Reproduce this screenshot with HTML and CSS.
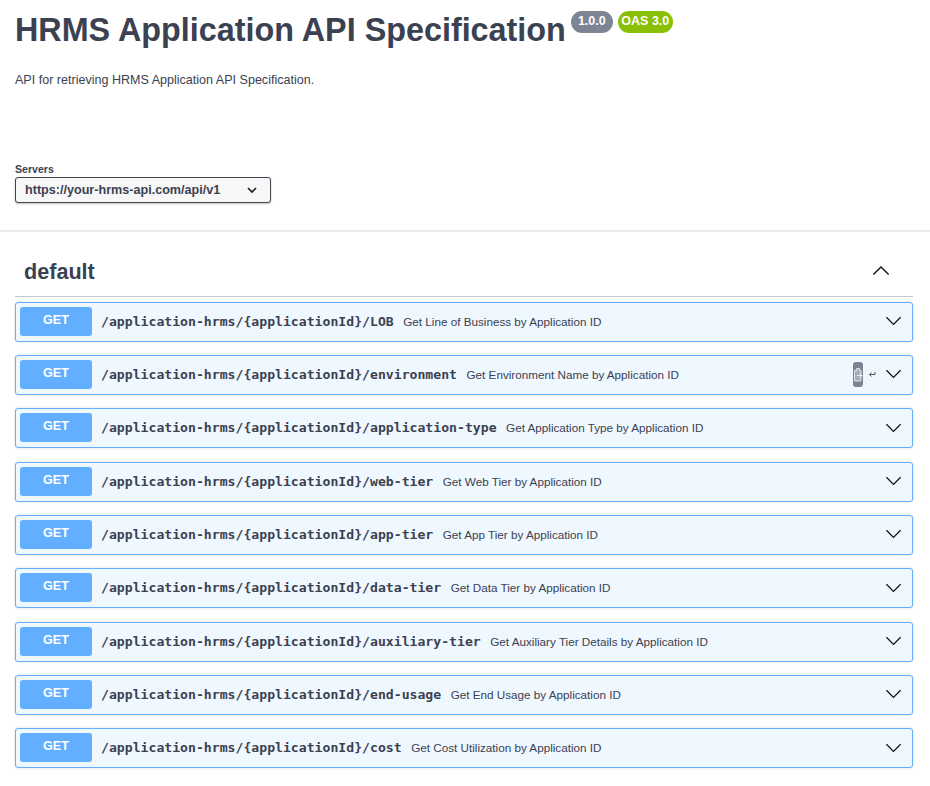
FILE: index.html
```html
<!DOCTYPE html>
<html lang="en">
<head>
<meta charset="utf-8">
<title>HRMS Application API Specification</title>
<link rel="stylesheet" href="styles.css">
</head>
<body>
<header class="info">
  <div class="title-row">
    <h1 class="title">HRMS Application API Specification</h1>
    <span class="badge badge-version">1.0.0</span>
    <span class="badge badge-oas">OAS 3.0</span>
  </div>
  <p class="description">API for retrieving HRMS Application API Specification.</p>
</header>
<section class="servers">
  <div class="servers-label">Servers</div>
  <div class="select">
    <span>https://your-hrms-api.com/api/v1</span>
    <svg class="select-arrow" viewBox="0 0 12 8"><path d="M2 2l4 4 4-4" fill="none" stroke="#222" stroke-width="1.7"/></svg>
  </div>
</section>
<main class="spec">
  <div class="tag">
    <h2 class="tag-name">default</h2>
    <svg class="tag-arrow" viewBox="0 0 20 12"><path d="M1.5 10.5L10 2l8.500 8.500" fill="none" stroke="#111" stroke-width="1.5"/></svg>
  </div>
  <div class="ops">
    <div class="op"><span class="method">GET</span><span class="path">/application-hrms/{applicationId}/LOB</span><span class="summary">Get Line of Business by Application ID</span><svg class="chev" viewBox="0 0 20 12"><path d="M1.500 1.500L10 10l8.500-8.500"/></svg></div>
    <div class="op"><span class="method">GET</span><span class="path">/application-hrms/{applicationId}/environment</span><span class="summary">Get Environment Name by Application ID</span>
      <span class="copy"><svg viewBox="0 0 10 25"><path d="M1.500 8.500h2V6.500h3v2h1.500v10.500h-6.500z" fill="#a9adb9" stroke="#e4e4e8" stroke-width="1"/><path d="M4 13.500h5M7 11.500l2 2-2 2" fill="none" stroke="#f0f0f2" stroke-width="1"/></svg></span>
      <svg class="enter" viewBox="0 0 8 6"><path d="M7 1v2.500H2M3.500 1.500L1.500 3.500l2 2" fill="none" stroke="#444" stroke-width=".9"/></svg>
      <svg class="chev chev-adjacent" viewBox="0 0 20 12"><path d="M1.500 1.500L10 10l8.500-8.500"/></svg></div>
    <div class="op"><span class="method">GET</span><span class="path">/application-hrms/{applicationId}/application-type</span><span class="summary">Get Application Type by Application ID</span><svg class="chev" viewBox="0 0 20 12"><path d="M1.500 1.500L10 10l8.500-8.500"/></svg></div>
    <div class="op"><span class="method">GET</span><span class="path">/application-hrms/{applicationId}/web-tier</span><span class="summary">Get Web Tier by Application ID</span><svg class="chev" viewBox="0 0 20 12"><path d="M1.500 1.500L10 10l8.500-8.500"/></svg></div>
    <div class="op"><span class="method">GET</span><span class="path">/application-hrms/{applicationId}/app-tier</span><span class="summary">Get App Tier by Application ID</span><svg class="chev" viewBox="0 0 20 12"><path d="M1.500 1.500L10 10l8.500-8.500"/></svg></div>
    <div class="op"><span class="method">GET</span><span class="path">/application-hrms/{applicationId}/data-tier</span><span class="summary">Get Data Tier by Application ID</span><svg class="chev" viewBox="0 0 20 12"><path d="M1.500 1.500L10 10l8.500-8.500"/></svg></div>
    <div class="op"><span class="method">GET</span><span class="path">/application-hrms/{applicationId}/auxiliary-tier</span><span class="summary">Get Auxiliary Tier Details by Application ID</span><svg class="chev" viewBox="0 0 20 12"><path d="M1.500 1.500L10 10l8.500-8.500"/></svg></div>
    <div class="op"><span class="method">GET</span><span class="path">/application-hrms/{applicationId}/end-usage</span><span class="summary">Get End Usage by Application ID</span><svg class="chev" viewBox="0 0 20 12"><path d="M1.500 1.500L10 10l8.500-8.500"/></svg></div>
    <div class="op"><span class="method">GET</span><span class="path">/application-hrms/{applicationId}/cost</span><span class="summary">Get Cost Utilization by Application ID</span><svg class="chev" viewBox="0 0 20 12"><path d="M1.500 1.500L10 10l8.500-8.500"/></svg></div>
  </div>
</main>
</body>
</html>
```
FILE: styles.css
```css
html, body { margin: 0; padding: 0; background: #fff; }
body { font-family: "Liberation Sans", Arial, sans-serif; color: #3b4151; width: 930px; height: 786px; overflow: hidden; }

.info { padding: 11px 15px 0; height: 150px; box-sizing: border-box; }
.title-row { display: flex; align-items: flex-start; }
.title { margin: 0; font-size: 32.350px; line-height: 38px; font-weight: 700; white-space: nowrap; }
.badge { color: #fff; font-size: 12.500px; font-weight: 700; line-height: 21px; height: 22px; border-radius: 11px; box-sizing: border-box; text-align: center; flex: none; }
.badge-version { background: #7d8492; margin-left: 5px; width: 42px; }
.badge-oas { background: #89bf04; margin-left: 5px; width: 55px; }
.description { margin: 23px 0 0; font-size: 12.550px; line-height: 16px; }

.servers { padding: 13px 15px 0; height: 82px; box-sizing: border-box; border-bottom: 2px solid #ebebeb; }
.servers-label { font-size: 10.600px; line-height: 12px; font-weight: 700; }
.select { margin-top: 2px; width: 256px; height: 26px; box-sizing: border-box; border: 1.500px solid #41444e; border-radius: 3px; background: #f7f7f7; box-shadow: 0 1px 2px rgba(0,0,0,.25); display: flex; align-items: center; justify-content: space-between; padding: 0 12px 0 9px; font-size: 12.600px; font-weight: 700; }
.select-arrow { width: 12px; height: 8px; }

.spec { padding: 0 17px 0 15px; }
.tag { height: 65px; box-sizing: border-box; border-bottom: 1px solid #c6c8cc; display: flex; align-items: center; justify-content: space-between; padding: 15px 23px 0 9px; }
.tag-name { margin: 0; font-size: 21.600px; line-height: 26px; font-weight: 700; }
.tag-arrow { width: 18px; height: 11px; margin-top: -2px; }

.ops { padding-top: 4.700px; display: flex; flex-direction: column; gap: 13.330px; }
.op { height: 40px; box-sizing: border-box; border: 1px solid #61affe; border-radius: 3px; background: #eff7ff; box-shadow: 0 0 3px rgba(0,0,0,.14); display: flex; align-items: center; padding: 0 10px 1.200px 4px; }
.method { width: 72px; height: 29px; background: #61affe; border-radius: 3px; color: #fff; font-size: 12.600px; font-weight: 700; line-height: 26px; text-align: center; flex: none; }
.path { margin-left: 9px; font-family: "DejaVu Sans Mono", monospace; font-size: 13.150px; font-weight: 700; white-space: nowrap; }
.summary { margin-left: 9.500px; font-size: 11.700px; white-space: nowrap; }
.chev { width: 17px; height: 10px; margin-left: auto; flex: none; }
.chev path { fill: none; stroke: #111; stroke-width: 1.500; }
.chev-adjacent { margin-left: 9px; }
.copy { margin-left: auto; width: 10px; height: 25px; background: #7d8293; border-radius: 3px; flex: none; display: flex; }
.copy svg { width: 10px; height: 25px; }
.enter { width: 8px; height: 6px; margin-left: 5px; flex: none; }
```
